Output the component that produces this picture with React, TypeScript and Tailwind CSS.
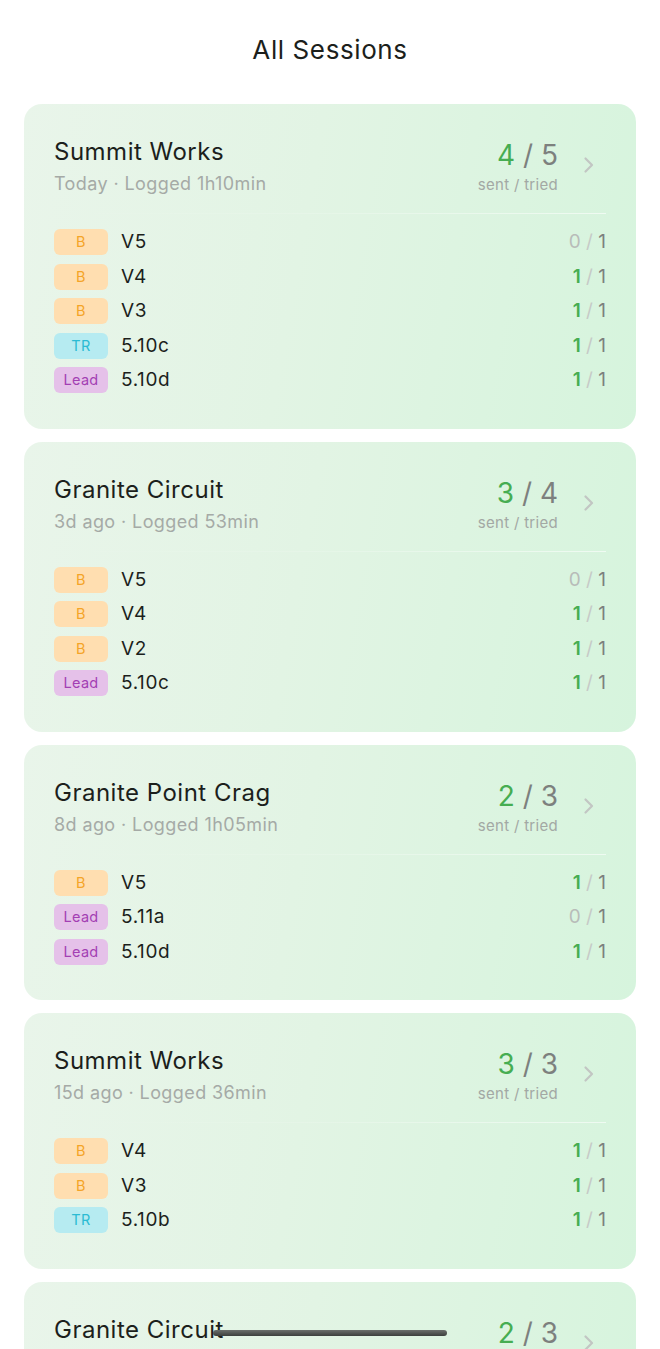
import React from "react";

type Kind = "B" | "TR" | "Lead";

type Climb = { kind: Kind; grade: string; sent: number; tried: number };

type Session = {
  gym: string;
  when: string;
  logged: string;
  climbs: Climb[];
};

const sessions: Session[] = [
  {
    gym: "Summit Works",
    when: "Today",
    logged: "1h10min",
    climbs: [
      { kind: "B", grade: "V5", sent: 0, tried: 1 },
      { kind: "B", grade: "V4", sent: 1, tried: 1 },
      { kind: "B", grade: "V3", sent: 1, tried: 1 },
      { kind: "TR", grade: "5.10c", sent: 1, tried: 1 },
      { kind: "Lead", grade: "5.10d", sent: 1, tried: 1 },
    ],
  },
  {
    gym: "Granite Circuit",
    when: "3d ago",
    logged: "53min",
    climbs: [
      { kind: "B", grade: "V5", sent: 0, tried: 1 },
      { kind: "B", grade: "V4", sent: 1, tried: 1 },
      { kind: "B", grade: "V2", sent: 1, tried: 1 },
      { kind: "Lead", grade: "5.10c", sent: 1, tried: 1 },
    ],
  },
  {
    gym: "Granite Point Crag",
    when: "8d ago",
    logged: "1h05min",
    climbs: [
      { kind: "B", grade: "V5", sent: 1, tried: 1 },
      { kind: "Lead", grade: "5.11a", sent: 0, tried: 1 },
      { kind: "Lead", grade: "5.10d", sent: 1, tried: 1 },
    ],
  },
  {
    gym: "Summit Works",
    when: "15d ago",
    logged: "36min",
    climbs: [
      { kind: "B", grade: "V4", sent: 1, tried: 1 },
      { kind: "B", grade: "V3", sent: 1, tried: 1 },
      { kind: "TR", grade: "5.10b", sent: 1, tried: 1 },
    ],
  },
  {
    gym: "Granite Circuit",
    when: "22d ago",
    logged: "48min",
    climbs: [
      { kind: "B", grade: "V4", sent: 1, tried: 1 },
      { kind: "B", grade: "V3", sent: 1, tried: 1 },
      { kind: "TR", grade: "5.10a", sent: 0, tried: 1 },
    ],
  },
];

const badgeStyles: Record<Kind, string> = {
  B: "bg-[#ffdeb0] text-[#f4a428]",
  TR: "bg-[#b6ebf1] text-[#2cbbd3]",
  Lead: "bg-[#e5c1e9] text-[#a33fb3]",
};

function Badge({ kind }: { kind: Kind }) {
  return (
    <div
      className={`flex h-[26px] w-[54px] shrink-0 items-center justify-center rounded-[6px] text-[14.5px] tracking-[0.3px] ${badgeStyles[kind]}`}
    >
      {kind}
    </div>
  );
}

function Chevron() {
  return (
    <svg width="14" height="20" viewBox="0 0 14 20" aria-hidden="true">
      <path
        d="M3.5 3.5 10 10l-6.5 6.5"
        fill="none"
        stroke="#c2c6c3"
        strokeWidth="2.2"
        strokeLinecap="round"
        strokeLinejoin="round"
      />
    </svg>
  );
}

function SessionCard({ session }: { session: Session }) {
  const sent = session.climbs.filter((c) => c.sent > 0).length;
  const tried = session.climbs.length;

  return (
    <div className="rounded-[18px] bg-[linear-gradient(100deg,#e9f5ea_0%,#e2f4e4_45%,#d6f4dd_100%)] px-[30px] pb-[31px] pt-[31px]">
      <div className="flex items-start">
        <div className="flex-1">
          <div className="text-[24px] leading-[34px] tracking-[0.5px] text-[#1c1f1c]">
            {session.gym}
          </div>
          <div className="text-[18px] leading-[30px] tracking-[0.4px] text-[#a5aaa6]">
            {session.when} · Logged {session.logged}
          </div>
        </div>
        <div className="flex items-center pr-[10px] pt-[3px]">
          <div className="flex flex-col items-end">
            <div className="text-[28px] leading-[34px] text-[#7d807e]">
              <span className="text-[#46ad52]">{sent}</span> / {tried}
            </div>
            <div className="mt-[2px] text-[15px] leading-[22px] tracking-[0.3px] text-[#a3a8a4]">
              sent / tried
            </div>
          </div>
          <div className="-mt-[4px] ml-[24px]">
            <Chevron />
          </div>
        </div>
      </div>
      <div className="mb-[11px] mt-[14px] h-px bg-[linear-gradient(90deg,rgba(255,255,255,0)_0%,rgba(255,255,255,0.15)_50%,rgba(255,255,255,0.6)_100%)]" />
      <div className="flex flex-col">
        {session.climbs.map((c, i) => (
          <div className="flex h-[34.5px] items-center" key={i}>
            <Badge kind={c.kind} />
            <div className="ml-[13px] flex-1 text-[19px] tracking-[0.6px] text-[#1c1f1c]">
              {c.grade}
            </div>
            <div className="text-[19px]">
              <span className={c.sent > 0 ? "font-semibold text-[#46ad52]" : "text-[#b8bcb9]"}>
                {c.sent}
              </span>
              <span className="text-[#c6cac7]"> / </span>
              <span className="text-[#7d807e]">{c.tried}</span>
            </div>
          </div>
        ))}
      </div>
    </div>
  );
}

export default function App() {
  return (
    <div className="relative h-[1349px] overflow-hidden bg-white font-['Inter','Noto_Sans',sans-serif]">
      <div className="pb-[24px] pt-[33px] text-center text-[26px] leading-[34px] tracking-[0.6px] text-[#1c1f1c]">
        All Sessions
      </div>
      <div className="mt-[13px] flex flex-col gap-[13px] px-[24px]">
        {sessions.map((s, i) => (
          <SessionCard key={i} session={s} />
        ))}
      </div>
      <div className="absolute bottom-[13px] left-[213px] h-[6px] w-[234px] rounded-full bg-[linear-gradient(180deg,#6b6f6c,#3c3f3d)]" />
    </div>
  );
}
